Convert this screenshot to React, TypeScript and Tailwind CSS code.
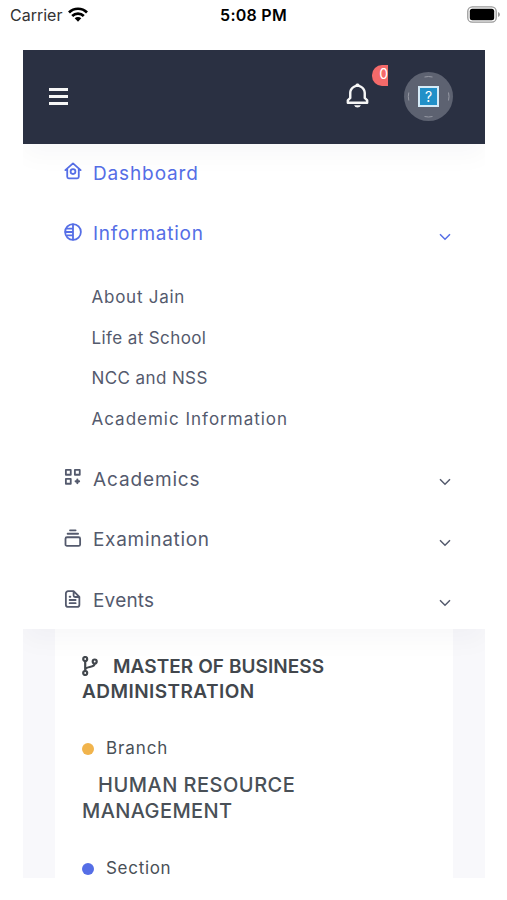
import * as React from "react";
import { BiBell } from "react-icons/bi";

type MenuItem = {
  label: string;
  icon: React.ReactNode;
  tracking: string;
  active?: boolean;
  arrow?: boolean;
  children?: { label: string; tracking: string }[];
};

function Icon({ children }: { children: React.ReactNode }) {
  return (
    <svg viewBox="0 0 24 24" className="h-[18px] w-[18px] shrink-0" fill="none" stroke="currentColor" strokeWidth="2.4" strokeLinecap="round" strokeLinejoin="round">
      {children}
    </svg>
  );
}

const HomeIcon = (
  <Icon>
    <path d="M1.800 10.800 12 1.800l10.200 9M4.300 9.500v10.300A2 2 0 0 0 6.300 21.800h11.400a2 2 0 0 0 2-2V9.500" />
    <circle cx="12" cy="12.800" r="3.200" />
  </Icon>
);

const InfoIcon = (
  <Icon>
    <circle cx="12" cy="12" r="10.500" />
    <path d="M12 2v20M4 7.500h8M2 12h10M4 16.500h8" />
  </Icon>
);

const AppsIcon = (
  <Icon>
    <path d="M2.500 2.500h6.500v6.500h-6.500zM14.500 2.500h6.500v6.500h-6.500zM2.500 14.500h6.500v6.500h-6.500z" />
    <path d="M17.800 15.500v4.600M15.500 17.800h4.600" strokeWidth="2.800" />
  </Icon>
);

const LayersIcon = (
  <Icon>
    <rect x="2" y="11" width="19.500" height="11.500" rx="2" />
    <path d="M4.800 6.300h14M8 1.800h7.500" />
  </Icon>
);

const FileIcon = (
  <Icon>
    <path d="M12.800 1.500H5.500a3 3 0 0 0-3 3v15a3 3 0 0 0 3 3h12a3 3 0 0 0 3-3V9.300zM12.800 1.500v5.800a2 2 0 0 0 2 2h5.700M7.500 13.300h8M7.500 17.600h8M7.500 9h1" />
  </Icon>
);

const items: MenuItem[] = [
  { label: "Dashboard", icon: HomeIcon, tracking: "tracking-[0.87px]", active: true },
  {
    label: "Information",
    icon: InfoIcon,
    tracking: "tracking-[0.75px]",
    active: true,
    arrow: true,
    children: [
      { label: "About Jain", tracking: "tracking-[0.75px]" },
      { label: "Life at School", tracking: "tracking-[0.4px]" },
      { label: "NCC and NSS", tracking: "tracking-[0.4px]" },
      { label: "Academic Information", tracking: "tracking-[1px]" },
    ],
  },
  { label: "Academics", icon: AppsIcon, tracking: "tracking-[0.87px]", arrow: true },
  { label: "Examination", icon: LayersIcon, tracking: "tracking-[0.7px]", arrow: true },
  { label: "Events", icon: FileIcon, tracking: "tracking-[0.2px]", arrow: true },
];

function StatusBar() {
  return (
    <div className="grid h-[49.500px] shrink-0 grid-cols-3 items-start pt-[4px] pr-[8px] pl-[10px] text-black">
      <div className="flex h-[22px] items-center gap-[6px]">
        <span className="text-[16px] text-[#333]">Carrier</span>
        <svg viewBox="0 0 20 15" className="mt-[-2px] h-[15px] w-[20px]" fill="none" stroke="currentColor" strokeWidth="2.700">
          <path d="M1 5.500a12.700 12.700 0 0 1 18 0M4.200 9a8.200 8.200 0 0 1 11.600 0" />
          <path d="m10 14.700-3.300-3.400a4.700 4.700 0 0 1 6.600 0z" fill="currentColor" stroke="none" />
        </svg>
      </div>
      <span className="pr-[2px] text-center text-[16px] leading-[22px] font-semibold tracking-[0.25px] whitespace-nowrap">5:08 PM</span>
      <svg viewBox="0 0 33 17" className="mt-[2px] mr-[-1px] h-[17px] w-[33px] justify-self-end">
        <rect x="0.800" y="0.800" width="28.400" height="15.400" rx="4.500" fill="none" stroke="#999" strokeWidth="1.300" />
        <rect x="2.800" y="2.800" width="24.400" height="11.400" rx="2.500" fill="#000" />
        <path d="M31 6q2 .8 2 2.500t-2 2.500z" fill="#999" />
      </svg>
    </div>
  );
}

function Header() {
  return (
    <header className="relative z-10 flex h-[94px] shrink-0 items-center bg-[#2a3042] pr-[32px] pl-[25.500px] shadow-[0_12px_24px_rgba(18,38,63,0.03)]">
      <button className="flex flex-col gap-[4px]">
        <span className="h-[3px] w-[19px] bg-[#f6f6f6]" />
        <span className="h-[3px] w-[19px] bg-[#f6f6f6]" />
        <span className="h-[3px] w-[19px] bg-[#f6f6f6]" />
      </button>
      <div className="relative mt-[-2px] mr-[32px] ml-auto text-[#f6f6f6]">
        <BiBell size={29} />
        <div className="absolute top-[-16px] left-[29px] flex h-[21px] w-[16px] justify-end overflow-hidden rounded-l-[10px] bg-[#f46a6a] text-[14px] leading-[18px] text-white">
          0
        </div>
      </div>
      <div className="relative flex h-[49px] w-[49px] items-center justify-center rounded-full bg-[#5d6271]">
        <svg viewBox="0 0 49 49" className="absolute inset-0" fill="none" stroke="#9699a4" strokeWidth="1">
          <path d="M20.500 5q4-1 8 0M20.500 44.500q4 1 8 0M4.800 20.500q-1 4 0 8M44.500 20.500q1 4 0 8" />
        </svg>
        <span className="relative flex h-[21px] w-[21px] items-center justify-center border-2 border-[#d5ebf8] bg-[#2190c8] text-[14px] leading-none text-white">
          ?
        </span>
      </div>
    </header>
  );
}

function Chevron() {
  return (
    <svg viewBox="0 0 12 8" className="mt-[4px] ml-auto h-[8px] w-[12px]" fill="none" stroke="currentColor" strokeWidth="1.500">
      <path d="m1 1.200 5 5 5-5" />
    </svg>
  );
}

function Menu() {
  return (
    <nav className="relative h-[485.500px] shrink-0 bg-white text-[#545a6d] shadow-[0_12px_24px_rgba(18,38,63,0.03)]">
      {items.map((item) => (
        <div key={item.label}>
          <div className={`flex h-[60.700px] items-center pr-[34px] pl-[41px] ${item.active ? "text-[#556ee6]" : ""}`}>
            <span className="mt-[-5px] mr-[11px]">{item.icon}</span>
            <span className={`text-[19px] ${item.tracking}`}>{item.label}</span>
            {item.arrow && <Chevron />}
          </div>
          {item.children && (
            <ul className="pt-[12px] pb-[10px] pl-[68.500px]">
              {item.children.map((c) => (
                <li key={c.label} className={`h-[40.700px] text-[17px] leading-[40.700px] ${c.tracking}`}>
                  {c.label}
                </li>
              ))}
            </ul>
          )}
        </div>
      ))}
    </nav>
  );
}

function Content() {
  return (
    <main className="h-[249px] shrink-0 bg-[#f8f8fb] px-[32px]">
      <div className="h-full overflow-hidden bg-white px-[27px] pt-[26px] text-[#495057]">
        <h4 className="text-[19px] leading-[24.500px] font-semibold text-[#42474d]">
          <svg viewBox="0 0 16 20" className="mr-[15px] inline h-[20px] w-[16px] align-[-3px]" fill="none" stroke="currentColor" strokeWidth="2.200">
            <circle cx="3.200" cy="3" r="2" />
            <circle cx="3.200" cy="17" r="2" />
            <circle cx="12.700" cy="5.500" r="2" />
            <path d="M3.200 5v10M12.700 7.500c0 5-9.500 2-9.500 6.500" />
          </svg>
          <span className="tracking-[0.06px]">MASTER OF BUSINESS</span>
          <br />
          <span className="tracking-[0.45px]">ADMINISTRATION</span>
        </h4>
        <div className="mt-[33px] flex h-[24px] items-center">
          <span className="mr-[12px] h-[12px] w-[12px] rounded-full bg-[#f1b44c]" />
          <span className="text-[17px] tracking-[0.9px]">Branch</span>
        </div>
        <h5 className="mt-[11px] text-[20px] leading-[26px] font-medium">
          <span className="pl-[16px] tracking-[0.5px]">HUMAN RESOURCE</span>
          <br />
          <span className="tracking-[0.4px]">MANAGEMENT</span>
        </h5>
        <div className="mt-[33px] flex h-[24px] items-center">
          <span className="mr-[12px] h-[12px] w-[12px] rounded-full bg-[#556ee6]" />
          <span className="text-[17px] tracking-[0.7px]">Section</span>
        </div>
      </div>
    </main>
  );
}

export default function App() {
  return (
    <div className="flex h-[900px] w-[507px] flex-col overflow-hidden bg-white font-['Inter',sans-serif]">
      <StatusBar />
      <div className="mr-[22px] ml-[23px] flex flex-col overflow-hidden">
        <Header />
        <Menu />
        <Content />
      </div>
    </div>
  );
}
